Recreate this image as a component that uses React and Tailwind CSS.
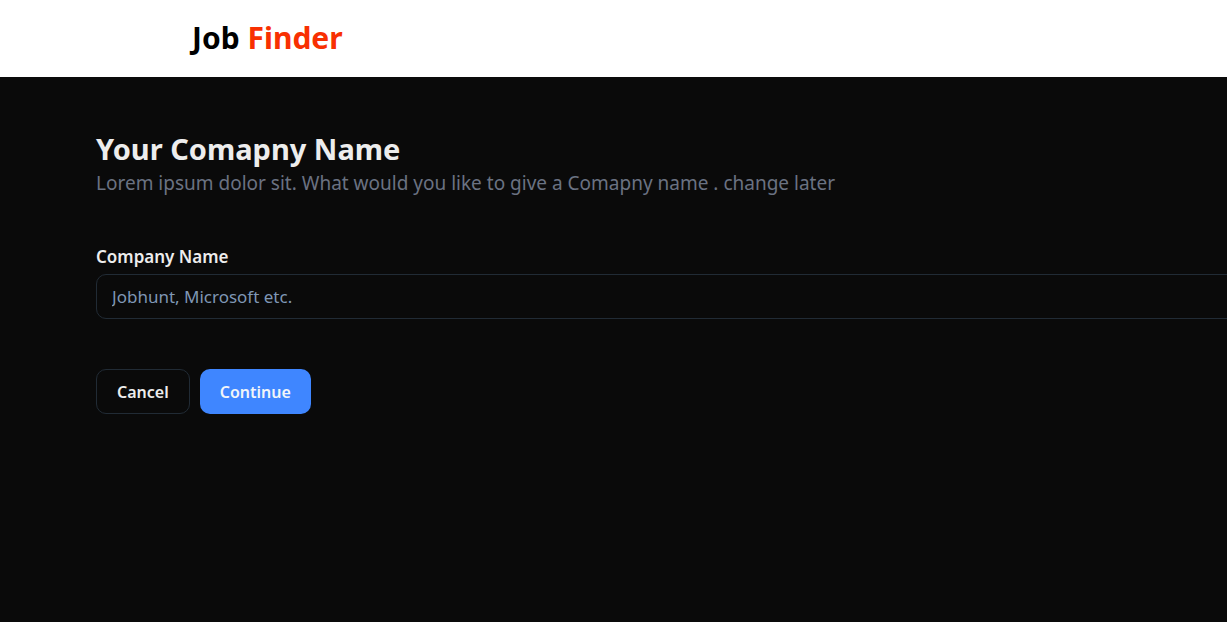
export default function App() {
  return (
    <div className="min-h-screen overflow-x-hidden bg-[#0a0a0a] font-['Segoe_UI','Noto_Sans',sans-serif] text-[#ededed]">
      <header className="bg-white">
        <div className="px-48 pt-[18px] pb-[19px]">
          <h1 className="text-[30px] leading-10 font-bold text-black">
            Job <span className="text-[#f83002]">Finder</span>
          </h1>
        </div>
      </header>
      <main className="pt-13 pl-24">
        <h2 className="text-[29px] leading-10 font-bold">Your Comapny Name</h2>
        <p className="text-[19px] leading-7 text-[#6a7282]">
          Lorem ipsum dolor sit. What would you like to give a Comapny name . change later
        </p>
        <form onSubmit={(e) => e.preventDefault()}>
          <label htmlFor="company" className="mt-12 block text-[17px] leading-6 font-semibold">
            Company Name
          </label>
          <input
            id="company"
            type="text"
            placeholder="Jobhunt, Microsoft etc."
            className="-mr-4 mt-[5px] block h-[45px] w-[calc(100%+16px)] rounded-[10px] border border-[#212b35] bg-transparent px-[15px] text-[17px] outline-none placeholder:text-[#7f97b5] focus:border-[#3f86ff]"
          />
          <div className="mt-[50px] flex gap-2.5">
            <button type="button" className="h-[45px] rounded-[10px] border border-[#212b35] px-5 text-base font-semibold">
              Cancel
            </button>
            <button type="submit" className="h-[45px] rounded-[10px] bg-[#3f86ff] px-5 text-base font-semibold text-slate-100">
              Continue
            </button>
          </div>
        </form>
      </main>
    </div>
  );
}
